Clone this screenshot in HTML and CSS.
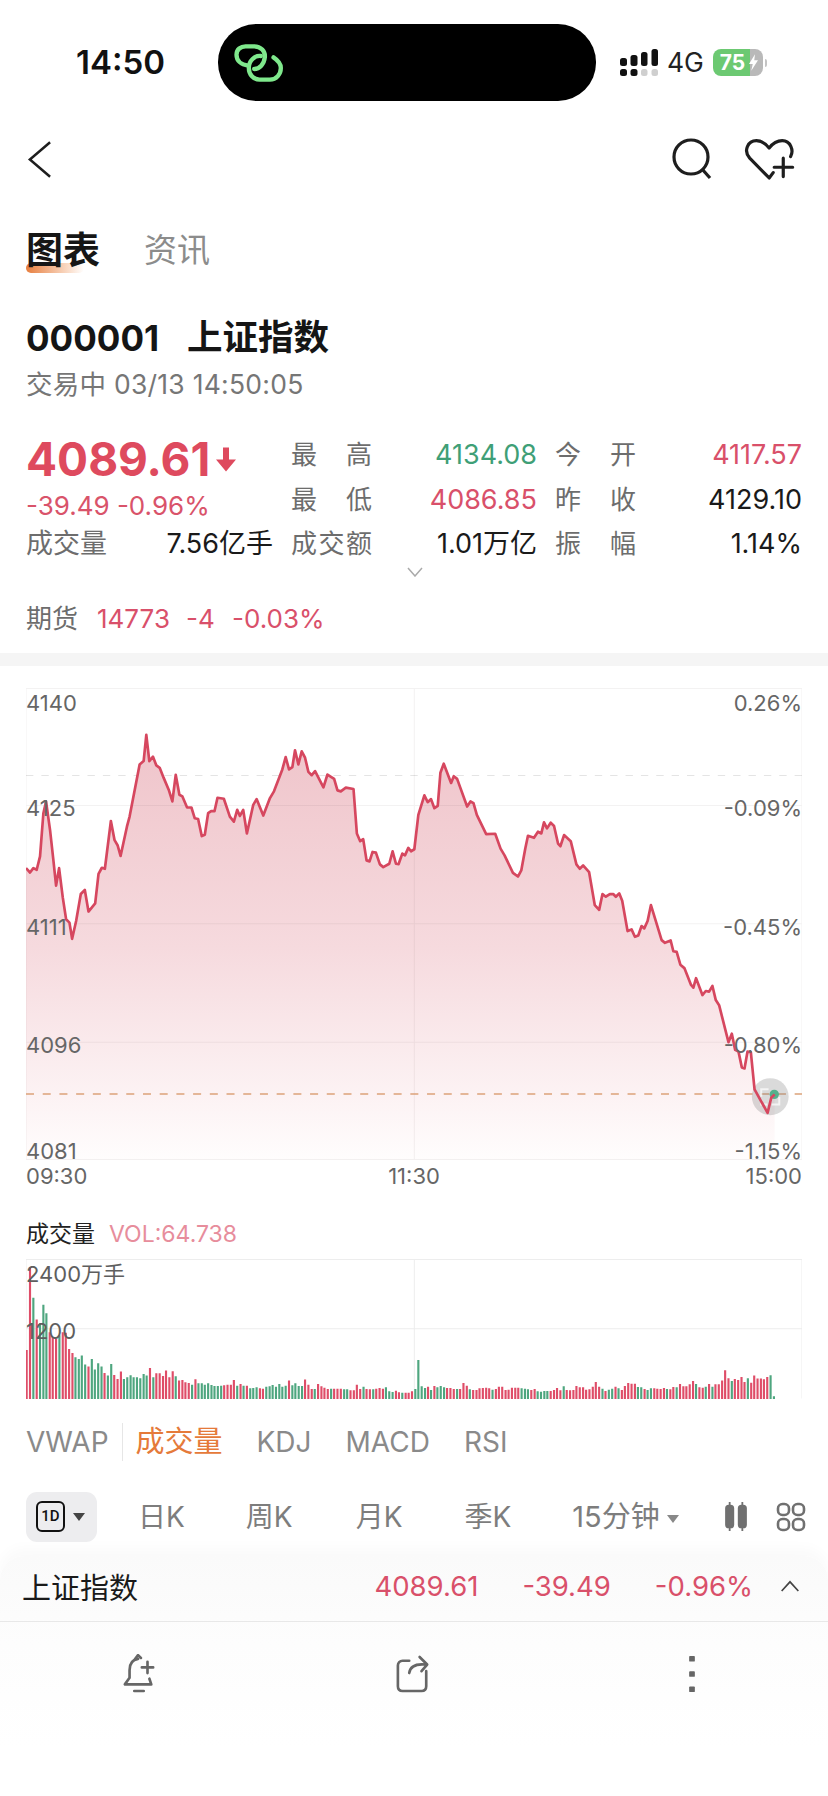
FILE: index.html
```html
<!DOCTYPE html>
<html lang="zh-CN">
<head>
<meta charset="utf-8">
<title>上证指数</title>
<link rel="stylesheet" href="styles.css">
</head>
<body>
<div class="page">
  <header class="status">
    <span class="clock">14:50</span>
    <div class="island">
      <svg class="island-logo" viewBox="28 40 146 114" aria-hidden="true">
        <path d="M70 105 C48 102 35 90 35 72 C35 56 48 47 62 47 H88 C108 47 122 62 120 80 C118 100 104 115 88 115"/>
        <path d="M108 76 C90 74 72 90 72 112 C72 132 86 147 104 147 H135 C155 147 168 130 168 112 C168 98 158 88 146 80"/>
      </svg>
    </div>
    <div class="status-right">
      <svg class="signal" viewBox="0 0 38 27" aria-hidden="true">
        <g class="sig-dark">
          <rect x="0" y="9" width="7" height="8" rx="2.5"/><rect x="10.5" y="6" width="7" height="11" rx="2.5"/>
          <rect x="21" y="3" width="6.5" height="14" rx="2.5"/><rect x="31.5" y="0" width="6.5" height="17" rx="2.5"/>
          <rect x="0" y="20" width="7" height="7" rx="2.5"/><rect x="10.5" y="20" width="7" height="7" rx="2.5"/>
        </g>
        <g class="sig-light">
          <rect x="21" y="20" width="6.5" height="7" rx="2.5"/><rect x="31.5" y="20" width="6.5" height="7" rx="2.5"/>
        </g>
      </svg>
      <span class="net">4G</span>
      <div class="battery">
        <span class="battery-level">75</span>
        <svg class="bolt" viewBox="0 0 12 22" aria-hidden="true"><path d="M8 0 L0 13 H5 L3 22 L12 8 H7 Z"/></svg>
      </div>
      <span class="battery-nub"></span>
    </div>
  </header>

  <nav class="nav">
    <svg class="icon-back" viewBox="0 0 26 40" aria-hidden="true"><path d="M24 2 L3 20 L24 38"/></svg>
    <div class="nav-right">
      <svg class="icon-search" viewBox="0 0 42 42" aria-hidden="true"><circle cx="20" cy="19" r="17"/><path d="M31 31 L39 40"/></svg>
      <svg class="icon-heart" viewBox="70 25 155 125" aria-hidden="true">
        <path d="M160 128 L148 144 L90 85 C70 62 85 33 110 33 C125 33 138 42 148 55 C158 42 172 33 187 33 C212 33 222 62 212 80"/>
        <path d="M190 85 V140 M163 112 H218"/>
      </svg>
    </div>
  </nav>

  <div class="tabs">
    <span class="tab tab-on">图表</span>
    <span class="tab">资讯</span>
  </div>

  <section class="quote">
    <h1 class="title"><span>000001</span><span class="title-name">上证指数</span></h1>
    <p class="sub">交易中 03/13 14:50:05</p>
    <div class="stats">
      <div class="price-box">
        <div class="price">4089.61<svg class="arrow" viewBox="0 0 20 24" aria-hidden="true"><path d="M7 0 H13 V12 H20 L10 24 L0 12 H7 Z"/></svg></div>
        <div class="change">-39.49 -0.96%</div>
      </div>
      <span class="lab">最高</span><span class="val up">4134.08</span><span class="lab">今开</span><span class="val dn">4117.57</span>
      <span class="lab">最低</span><span class="val dn">4086.85</span><span class="lab">昨收</span><span class="val">4129.10</span>
      <div class="vol-cell"><span class="lab-plain">成交量</span><span class="val">7.56亿手</span></div>
      <span class="lab">成交额</span><span class="val">1.01万亿</span><span class="lab">振幅</span><span class="val">1.14%</span>
    </div>
    <svg class="more" viewBox="0 0 16 10" aria-hidden="true"><path d="M1 1 L8 9 L15 1"/></svg>
    <p class="futures"><span class="fut-lab">期货</span><span class="fut-a">14773</span><span class="fut-b">-4</span><span class="fut-c">-0.03%</span></p>
  </section>

  <div class="band"></div>

  <section class="chart">
    <svg class="chart-svg" viewBox="78 48 2322 1402" preserveAspectRatio="none" aria-hidden="true">
      <defs>
        <linearGradient id="area" gradientUnits="userSpaceOnUse" x1="0" y1="187" x2="0" y2="1450">
          <stop offset="0" stop-color="#efc4ca"/>
          <stop offset="0.5" stop-color="#f6dade"/>
          <stop offset="1" stop-color="#fffdfd"/>
        </linearGradient>
      </defs>
      <path class="dash-grey" d="M78 308 H2400"/>
      <polygon class="area" points="78,1450 78,583 90,596 100,583 110,588 120,548 130,420 138,385 150,470 160,560 168,635 177,583 188,670 198,735 208,745 216,793 228,740 242,660 254,648 265,712 285,688 295,600 305,582 314,585 332,443 343,500 352,515 361,547 380,460 388,430 418,275 430,265 438,187 447,265 458,252 468,278 478,285 490,315 505,350 516,385 526,306 537,365 546,370 560,403 573,403 583,435 593,437 604,488 613,484 623,420 632,414 642,414 651,374 670,377 688,430 700,445 710,410 718,428 728,410 739,480 758,395 768,378 788,427 808,375 820,355 845,290 855,253 865,290 875,283 883,233 893,275 903,236 913,255 923,297 933,307 943,295 968,343 980,305 1000,318 1010,352 1020,355 1035,344 1058,348 1068,480 1078,503 1087,497 1097,560 1106,563 1115,535 1125,537 1137,572 1147,580 1165,570 1175,533 1185,570 1193,571 1204,540 1212,545 1222,523 1230,533 1240,527 1252,425 1270,367 1280,387 1290,378 1300,405 1310,398 1318,300 1328,273 1350,330 1358,310 1368,318 1398,400 1408,385 1417,390 1427,425 1455,482 1482,481 1498,525 1510,545 1535,597 1550,608 1560,590 1572,525 1580,487 1598,493 1610,475 1620,480 1628,447 1637,465 1648,448 1658,458 1670,510 1677,518 1688,485 1708,503 1725,572 1735,585 1745,575 1763,595 1780,693 1793,707 1803,660 1813,668 1825,660 1835,660 1843,668 1853,658 1862,680 1878,770 1890,765 1900,787 1910,783 1920,755 1928,762 1938,740 1948,693 1980,797 1990,805 2007,798 2015,830 2025,832 2036,870 2048,880 2068,930 2075,938 2083,910 2102,960 2112,948 2122,950 2132,933 2142,975 2152,990 2180,1100 2190,1075 2200,1123 2210,1128 2220,1175 2228,1178 2237,1128 2247,1130 2258,1240 2297,1310 2308,1265 2318,1255 2318,1450"/>
      <path class="grid" d="M78 49.5 H2400 V1448.5 H78 Z M78 397 H2400 M78 748 H2400 M78 1100 H2400 M1240 48 V1450"/>
      <path class="dash-orange" d="M78 1254 H2400"/>
      <circle class="mark" cx="2305" cy="1262" r="55"/>
      <path class="mark-box" d="M2278 1262 V1240 H2300 M2310 1285 H2332 V1262 M2278 1270 V1285 H2296"/>
      <circle class="mark-dot" cx="2317" cy="1255" r="14"/>
      <polyline class="line" points="78,583 90,596 100,583 110,588 120,548 130,420 138,385 150,470 160,560 168,635 177,583 188,670 198,735 208,745 216,793 228,740 242,660 254,648 265,712 285,688 295,600 305,582 314,585 332,443 343,500 352,515 361,547 380,460 388,430 418,275 430,265 438,187 447,265 458,252 468,278 478,285 490,315 505,350 516,385 526,306 537,365 546,370 560,403 573,403 583,435 593,437 604,488 613,484 623,420 632,414 642,414 651,374 670,377 688,430 700,445 710,410 718,428 728,410 739,480 758,395 768,378 788,427 808,375 820,355 845,290 855,253 865,290 875,283 883,233 893,275 903,236 913,255 923,297 933,307 943,295 968,343 980,305 1000,318 1010,352 1020,355 1035,344 1058,348 1068,480 1078,503 1087,497 1097,560 1106,563 1115,535 1125,537 1137,572 1147,580 1165,570 1175,533 1185,570 1193,571 1204,540 1212,545 1222,523 1230,533 1240,527 1252,425 1270,367 1280,387 1290,378 1300,405 1310,398 1318,300 1328,273 1350,330 1358,310 1368,318 1398,400 1408,385 1417,390 1427,425 1455,482 1482,481 1498,525 1510,545 1535,597 1550,608 1560,590 1572,525 1580,487 1598,493 1610,475 1620,480 1628,447 1637,465 1648,448 1658,458 1670,510 1677,518 1688,485 1708,503 1725,572 1735,585 1745,575 1763,595 1780,693 1793,707 1803,660 1813,668 1825,660 1835,660 1843,668 1853,658 1862,680 1878,770 1890,765 1900,787 1910,783 1920,755 1928,762 1938,740 1948,693 1980,797 1990,805 2007,798 2015,830 2025,832 2036,870 2048,880 2068,930 2075,938 2083,910 2102,960 2112,948 2122,950 2132,933 2142,975 2152,990 2180,1100 2190,1075 2200,1123 2210,1128 2220,1175 2228,1178 2237,1128 2247,1130 2258,1240 2297,1310 2308,1265 2318,1255"/>
    </svg>
    <span class="ylab ylab-l y1">4140</span><span class="ylab ylab-r y1">0.26%</span>
    <span class="ylab ylab-l y2">4125</span><span class="ylab ylab-r y2">-0.09%</span>
    <span class="ylab ylab-l y3">4111</span><span class="ylab ylab-r y3">-0.45%</span>
    <span class="ylab ylab-l y4">4096</span><span class="ylab ylab-r y4">-0.80%</span>
    <span class="ylab ylab-l y5">4081</span><span class="ylab ylab-r y5">-1.15%</span>
  </section>
  <div class="times"><span>09:30</span><span>11:30</span><span class="time-end">15:00</span></div>

  <div class="vol-head"><span class="vol-name">成交量</span><span class="vol-val">VOL:64.738</span></div>
  <section class="volume">
    <svg class="vol-svg" viewBox="78 176 2322 419" preserveAspectRatio="none" aria-hidden="true">
      <path class="grid-thin" d="M78 177.5 H2400 V593.5 M78 385 H2400 M1240 176 V595 M78 177.5 V595"/>
      <g class="bars-r">
        <path d="M80 448V595M90 200V595M110 357V595M149 395V595M158 410V595M168 415V595M188 395V595M197 397V595M207 445V595M217 457V595M265 498V595M313 517V595M342 523V595M352 535V595M362 513V595M449 502V595M468 518V595M478 518V595M488 526V595M497 510V595M507 530V595M517 512V595M536 540V595M546 538V595M555 545V595M565 547V595M585 536V595M671 554V595M681 552V595M691 552V595M700 538V595M720 550V595M739 555V595M778 563V595M787 564V595M865 540V595M913 537V595M923 552V595M933 565V595M952 550V595M962 557V595M971 561V595M981 565V595M1000 564V595M1010 564V595M1020 564V595M1049 569V595M1059 569V595M1068 552V595M1078 565V595M1097 565V595M1107 566V595M1126 564V595M1136 562V595M1146 564V595M1185 570V595M1194 575V595M1214 576V595M1223 576V595M1233 572V595"/>
        <path d="M1281 558V595M1300 556V595M1338 562V595M1348 562V595M1358 565V595M1377 565V595M1387 547V595M1397 555V595M1416 568V595M1426 568V595M1435 563V595M1445 562V595M1455 561V595M1464 563V595M1484 565V595M1493 558V595M1503 558V595M1513 568V595M1522 567V595M1532 561V595M1542 561V595M1551 561V595M1590 568V595M1600 565V595M1648 571V595M1658 568V595M1667 562V595M1677 569V595M1696 568V595M1706 569V595M1716 568V595M1725 556V595M1735 560V595M1745 560V595M1754 567V595M1764 566V595M1774 558V595M1783 544V595M1793 558V595M1812 571V595M1842 558V595M1861 568V595M1870 556V595M1880 547V595M1890 549V595M1900 549V595M1929 565V595M1958 563V595M1967 564V595M1977 565V595M1987 562V595M2006 566V595M2015 559V595M2035 550V595M2045 557V595M2054 557V595M2064 551V595M2074 541V595M2093 560V595M2103 561V595M2122 550V595M2141 551V595M2151 551V595M2161 540V595M2170 509V595M2180 533V595M2199 535V595M2209 538V595M2219 529V595M2228 544V595M2248 546V595M2257 525V595M2267 534V595M2277 534V595M2286 536V595M2296 529V595"/>
      </g>
      <g class="bars-g">
        <path d="M100 292V595M120 368V595M130 313V595M139 338V595M178 405V595M226 470V595M236 475V595M245 465V595M255 492V595M275 475V595M284 507V595M294 488V595M304 498V595M323 525V595M333 490V595M371 535V595M381 530V595M391 524V595M400 530V595M410 530V595M420 533V595M430 520V595M439 525V595M459 530V595M526 527V595M575 552V595M594 548V595M604 548V595M613 552V595M623 548V595M633 553V595M642 556V595M652 556V595M662 555V595M710 555V595M729 555V595M749 563V595M758 562V595M768 560V595M797 558V595M807 557V595M816 553V595M826 558V595M836 550V595M845 558V595M855 555V595M875 554V595M884 548V595M894 556V595M904 556V595M942 565V595M991 564V595M1030 566V595M1039 566V595M1088 558V595M1117 566V595M1155 560V595M1165 572V595M1175 574V595M1204 576V595M1243 565V595M1252 478V595"/>
        <path d="M1262 557V595M1272 562V595M1290 568V595M1309 560V595M1319 556V595M1329 560V595M1368 565V595M1406 566V595M1474 567V595M1561 563V595M1571 564V595M1580 566V595M1609 572V595M1619 573V595M1629 571V595M1638 571V595M1687 557V595M1803 564V595M1822 567V595M1832 564V595M1851 563V595M1909 559V595M1919 560V595M1938 568V595M1948 563V595M1996 565V595M2025 560V595M2083 550V595M2112 558V595M2132 558V595M2190 541V595M2238 533V595M2306 524V595M2316 587V595"/>
      </g>
    </svg>
    <span class="vlab v1">2400万手</span>
    <span class="vlab v2">1200</span>
  </section>

  <div class="indicators">
    <span class="ind ind-sep">VWAP</span>
    <span class="ind ind-on">成交量</span>
    <span class="ind">KDJ</span>
    <span class="ind">MACD</span>
    <span class="ind">RSI</span>
  </div>

  <div class="periods">
    <div class="period-1d">
      <span class="badge-1d">1D</span>
      <span class="caret caret-dark"></span>
    </div>
    <span class="period p-day">日K</span>
    <span class="period p-week">周K</span>
    <span class="period p-month">月K</span>
    <span class="period p-season">季K</span>
    <span class="period p-min">15分钟<span class="caret"></span></span>
    <div class="period-icons">
      <svg class="icon-candle" viewBox="0 0 24 32" aria-hidden="true"><path d="M5 0V32M19 0V32"/><rect x="1" y="4" width="8" height="24" rx="3"/><rect x="15" y="4" width="8" height="24" rx="3"/></svg>
      <svg class="icon-grid" viewBox="0 0 30 30" aria-hidden="true"><rect x="2" y="2" width="11" height="11" rx="4.5"/><rect x="17" y="2" width="11" height="11" rx="4.5"/><rect x="2" y="17" width="11" height="11" rx="4.5"/><rect x="17" y="17" width="11" height="11" rx="4.5"/></svg>
    </div>
  </div>

  <footer class="dock">
    <div class="summary">
      <span class="sum-name">上证指数</span>
      <span class="sum-nums"><span>4089.61</span><span>-39.49</span><span>-0.96%</span></span>
      <svg class="icon-up" viewBox="0 0 24 14" aria-hidden="true"><path d="M2 13 L12 2 L22 13"/></svg>
    </div>
    <div class="actions">
      <svg class="act-bell" viewBox="0 0 36 42" aria-hidden="true">
        <path d="M17 5 C10 6 8 11 8 17 V25 L3 32 H31 L29 26"/>
        <path d="M13 39 H23 M14 5 L17 1 L20 4 M27 8 V20 M21 14 H33"/>
      </svg>
      <svg class="act-share" viewBox="0 0 36 42" aria-hidden="true">
        <path d="M14 7 H7 C4 7 2 9 2 12 V34 C2 37 4 39 7 39 H27 C30 39 32 37 32 34 V18"/>
        <path d="M14 20 C15 13 20 10 31 11 M25 3 L33 11 L27 18"/>
      </svg>
      <svg class="act-more" viewBox="0 0 8 42" aria-hidden="true"><rect x="1" y="2" width="6" height="6" rx="1"/><rect x="1" y="18" width="6" height="6" rx="1"/><rect x="1" y="34" width="6" height="6" rx="1"/></svg>
    </div>
  </footer>
</div>
</body>
</html>
```

FILE: styles.css
```css
* { box-sizing: border-box; }
html, body { margin: 0; padding: 0; background: #fff; }
body {
  font-family: Inter, "Noto Sans CJK SC", sans-serif;
  color: #1a1a1a;
}
p, h1 { margin: 0; font-weight: normal; }
.page { width: 828px; height: 1796px; overflow: hidden; }

/* status bar */
.status { display: flex; align-items: center; height: 101px; padding: 24px 0 0 76px; }
.clock { width: 142px; font: 600 33px/1 Inter, sans-serif; color: #111; }
.island { width: 378px; height: 77px; border-radius: 38px; background: #000; display: flex; align-items: center; padding-left: 16px; }
.island-logo { width: 49px; height: 38px; fill: none; stroke: #7fe88c; stroke-width: 13; stroke-linecap: round; }
.status-right { display: flex; align-items: center; margin-left: 24px; }
.signal { width: 38px; height: 27px; }
.sig-dark { fill: #111; }
.sig-light { fill: #cfcfcf; }
.net { font: 400 26.5px/1 Inter, sans-serif; margin-left: 9px; color: #222; }
.battery { display: flex; align-items: center; margin-left: 9px; width: 50px; height: 27px; border-radius: 8px; overflow: hidden; background: linear-gradient(90deg, #6cc972 74%, #b9b9b9 74%); }
.battery-level { width: 36px; padding-left: 3px; color: #fff; font: 700 21px/27px Inter, sans-serif; text-align: center; }
.bolt { width: 9px; height: 17px; fill: #fff; }
.battery-nub { width: 2px; height: 8px; background: #c4c4c4; margin-left: 2px; border-radius: 0 2px 2px 0; }

/* nav */
.nav { display: flex; justify-content: space-between; align-items: center; height: 116px; padding: 0 33px 0 27px; }
.nav svg { fill: none; stroke: #1e1e1e; }
.icon-back { width: 25px; height: 39px; stroke-width: 2.6; }
.nav-right { display: flex; align-items: center; gap: 30px; }
.icon-search { width: 42px; height: 42px; stroke-width: 3.2; }
.icon-heart { width: 52px; height: 42px; stroke-width: 9.5; stroke-linejoin: round; stroke-linecap: round; }

/* tabs */
.tabs { display: flex; align-items: center; gap: 44px; height: 66px; padding-left: 26px; }
.tab { position: relative; isolation: isolate; font-size: 33px; line-height: 1; color: #8c8c8c; }
.tab-on { font-size: 37px; font-weight: 700; color: #161616; }
.tab-on::after { content: ""; position: absolute; left: 0; top: 31px; width: 58px; height: 10px; border-radius: 5px; background: linear-gradient(90deg, #e77e3e, #f9d8c2 70%, rgba(255,255,255,0)); z-index: -1; }

/* quote */
.quote { position: relative; padding: 30px 26px 0; }
.title { display: flex; gap: 28px; font-size: 35px; font-weight: 700; line-height: 50px; color: #151515; }
.title-name { font-size: 35.5px; }
.sub { font-size: 26.5px; line-height: 42px; color: #767676; letter-spacing: .25px; }
.stats { display: grid; grid-template-columns: 247px 99px 165px 100px 165px; grid-auto-rows: 44.5px; margin-top: 28px; font-size: 27px; align-items: center; }
.stats > :nth-child(n) { line-height: 44.5px; }
.price-box { grid-row: 1 / span 2; grid-column: 1; align-self: start; }
.price { display: flex; align-items: center; font-size: 46px; font-weight: 700; line-height: 52px; color: #de4a5e; }
.arrow { width: 20px; height: 25px; margin-left: 6px; fill: #de4a5e; }
.change { font-size: 26px; line-height: 34px; margin-top: 4px; color: #d9536a; }
.lab { font-size: 26px; color: #6d6d6d; text-align-last: justify; margin-left: 18px; width: 81px; }
.val { text-align: right; color: #1a1a1a; }
.val.up { color: #3f9f77; }
.val.dn { color: #d9506a; }
.vol-cell { display: flex; justify-content: space-between; grid-column: 1; }
.lab-plain { color: #6d6d6d; }
.more { display: block; width: 16px; height: 10px; margin: 0 0 0 381px; fill: none; stroke: #aaa; stroke-width: 1.5; }
.futures { display: flex; margin-top: 22px; font-size: 26px; line-height: 40px; color: #d9506a; }
.fut-lab { color: #6d6d6d; width: 71px; }
.fut-a { width: 89px; }
.fut-b { width: 46px; }

.band { height: 13px; margin-top: 14px; background: #f5f5f5; }

/* chart */
.chart { position: relative; margin: 22px 26px 0; height: 472px; width: 776px; }
.chart-svg { display: block; width: 776px; height: 472px; }
.grid { fill: none; stroke: rgba(90,70,70,.07); stroke-width: 3; }
.dash-grey { fill: none; stroke: #e4e4e4; stroke-width: 3; stroke-dasharray: 22 24; }
.area { fill: url(#area); }
.dash-orange { fill: none; stroke: #dca27a; stroke-width: 4; stroke-dasharray: 24 26; }
.mark { fill: #8c8c8c; fill-opacity: .32; }
.mark-box { fill: none; stroke: #fff; stroke-width: 6; opacity: .7; }
.mark-dot { fill: #55b08c; }
.line { fill: none; stroke: #d6475f; stroke-width: 8; stroke-linejoin: round; }
.ylab { position: absolute; font-size: 22px; line-height: 26px; color: #666; }
.ylab-l { left: 0; }
.ylab-r { right: 0; }
.y1 { top: 2px; }
.y2 { top: 107px; }
.y3 { top: 226px; }
.y4 { top: 344px; }
.y5 { top: 450px; }
.times { display: grid; grid-template-columns: 1fr auto 1fr; margin-top: 3px; padding: 0 26px; font-size: 22px; line-height: 26px; color: #666; }
.time-end { justify-self: end; }

/* volume */
.vol-head { display: flex; gap: 14px; margin-top: 29px; padding-left: 26px; line-height: 32px; }
.vol-name { font-size: 23px; color: #222; }
.vol-val { font-size: 23px; color: #e78d9c; }
.volume { position: relative; margin: 9px 26px 0; width: 776px; height: 140px; }
.vol-svg { display: block; width: 776px; height: 140px; }
.grid-thin { fill: none; stroke: #ededed; stroke-width: 3; }
.bars-r path, .bars-g path { fill: none; stroke-width: 6.4; }
.bars-r path { stroke: #df4d68; }
.bars-g path { stroke: #4ea67f; }
.vlab { position: absolute; left: 0; font-size: 22px; line-height: 26px; color: #5e5e5e; }
.v1 { top: 2px; }
.v2 { top: 59px; }

/* indicators */
.indicators { display: flex; align-items: center; height: 50px; margin-top: 18px; padding-left: 26px; font-size: 28px; line-height: 38px; color: #8a8a8a; }
.ind { margin-right: 34px; }
.ind-sep { margin-right: 13px; padding-right: 13px; border-right: 1px solid #e6e6e6; }
.ind-on { color: #e57a3a; font-size: 29px; }

/* periods */
.periods { display: flex; align-items: center; height: 50px; margin-top: 25px; padding: 0 22px 0 26px; font-size: 28px; color: #7d7d7d; }
.period-1d { display: flex; align-items: center; gap: 8px; width: 71px; height: 50px; padding-left: 10px; border-radius: 11px; background: #ededef; }
.badge-1d { width: 29px; height: 31px; border: 2.5px solid #111; border-radius: 6px; font: 500 15px/26px Roboto, sans-serif; text-align: center; color: #111; }
.caret { display: inline-block; width: 0; height: 0; border-left: 6px solid transparent; border-right: 6px solid transparent; border-top: 8px solid #888; margin-left: 7px; vertical-align: middle; }
.caret-dark { border-top-color: #444; margin-left: 0; }
.period { line-height: 50px; }
.p-day { margin-left: 41px; }
.p-week { margin-left: 61px; }
.p-month { margin-left: 63px; }
.p-season { margin-left: 62px; }
.p-min { margin-left: 61px; font-size: 29px; }
.period-icons { display: flex; align-items: center; gap: 29px; margin-left: auto; }
.icon-candle { width: 22px; height: 29px; fill: #707070; stroke: #707070; stroke-width: 2; }
.icon-grid { width: 30px; height: 30px; fill: none; stroke: #707070; stroke-width: 2.6; }

/* dock */
.dock { margin-top: 14px; height: 255px; border-radius: 24px 24px 0 0; background: linear-gradient(#fafafa, #fdfdfd 35%, #fff 75%); box-shadow: 0 -8px 14px rgba(0,0,0,.025); }
.summary { display: flex; align-items: center; height: 66px; padding: 0 28px 4px 22px; border-bottom: 1px solid #e8e8e8; }
.sum-name { font-size: 29px; color: #1a1a1a; flex: 1; }
.sum-nums { display: flex; gap: 44px; font-size: 27.5px; color: #d9506a; }
.icon-up { width: 20px; height: 12px; margin-left: 27px; fill: none; stroke: #444; stroke-width: 2; }
.actions { display: flex; height: 104px; align-items: center; }
.actions svg { fill: none; stroke: #666; stroke-width: 2.8; stroke-linecap: round; stroke-linejoin: round; height: 40px; }
.act-bell { width: 34px; margin-left: 122px; }
.act-share { width: 34px; margin-left: 240px; }
.actions .act-more { width: 8px; margin-left: 258px; fill: #666; stroke: none; }
```
